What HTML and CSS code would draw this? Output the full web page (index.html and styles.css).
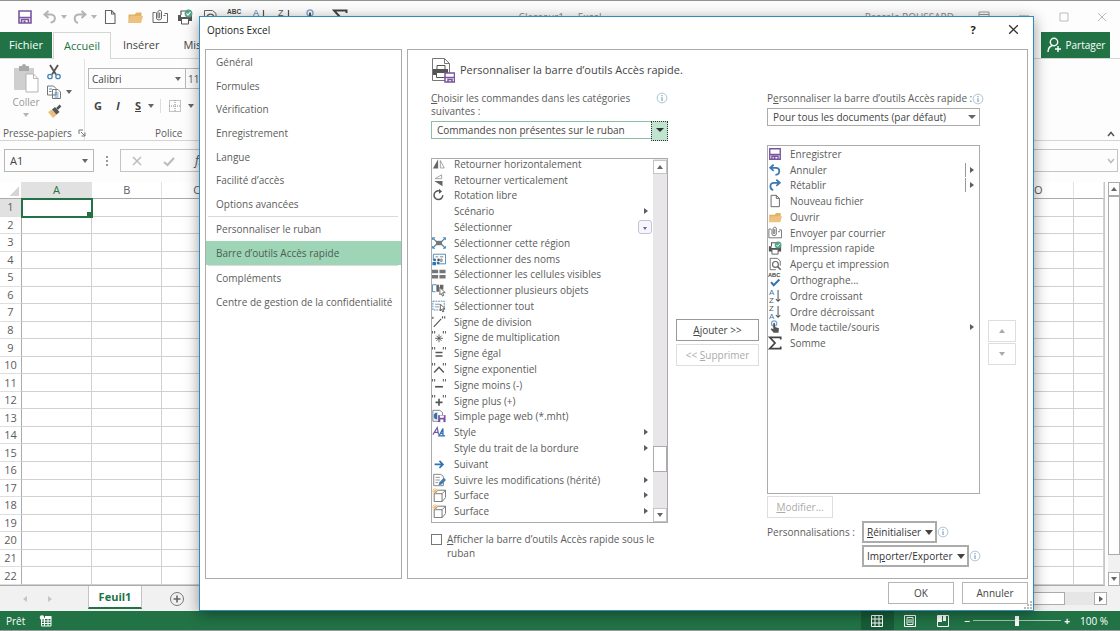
FILE: index.html
```html
<!DOCTYPE html>
<html lang="fr">
<head>
<meta charset="utf-8">
<title>Classeur1 - Excel</title>
<link rel="stylesheet" href="styles.css">
</head>
<body>
<svg class="sprite" aria-hidden="true">
  <symbol id="save" viewBox="0 0 16 16"><path d="M2 2h12v12H2z" fill="#fff" stroke="#7a559f" stroke-width="1.6"/><path d="M2 8.5h12M4.5 14v-3.5h7V14" fill="none" stroke="#7a559f" stroke-width="1.6"/><path d="M6.5 11.5h2V14h-2z" fill="#7a559f"/></symbol>
  <symbol id="undo" viewBox="0 0 16 16"><path d="M6.5 2 2.5 5.5l4 3.5M3 5.5h6c5 0 5.5 7.5-.5 8" fill="none" stroke="currentColor" stroke-width="2"/></symbol>
  <symbol id="redo" viewBox="0 0 16 16"><path d="M9.5 2l4 3.5-4 3.500M13 5.500H7c-5.500 0-5.500 7-1 8.500" fill="none" stroke="currentColor" stroke-width="2"/></symbol>
  <symbol id="new" viewBox="0 0 16 16"><path d="M3.500 1.500h6l3.500 3.500v9.500H3.500zM9.500 1.500V5H13" fill="#fff" stroke="#666" stroke-width="1.100"/></symbol>
  <symbol id="open" viewBox="0 0 16 16"><path d="M1.500 13V5.500h6l2-2h5V7" fill="#e3b269"/><path d="M3.500 7h12.500l-2 7H1z" fill="#edc27f"/></symbol>
  <symbol id="mail" viewBox="0 0 16 16"><path d="M3.500 3.500H1v10h14.500v-9h-3" fill="none" stroke="#666"/><path d="M4.500 3.500v5.500a2.500 2 0 0 0 5 0V2.500a1.800 1.500 0 0 0-3.500 0V8a.8.8 0 0 0 1.700 0V3.500M11.500 6.500h2" fill="none" stroke="#666"/></symbol>
  <symbol id="print" viewBox="0 0 16 16"><path d="M4 6V2h6" fill="none" stroke="#555" stroke-width="1.200"/><path d="M1 6h3v2h8V6h3v6H1z" fill="#555"/><path d="M4.500 9.500h7V15h-7z" fill="#fff" stroke="#555"/><circle cx="11.500" cy="4.500" r="3.900" fill="#55a385"/><path d="m9.500 4.500 1.500 1.600L13.500 3" fill="none" stroke="#fff" stroke-width="1.100"/></symbol>
  <symbol id="preview" viewBox="0 0 16 16"><path d="M14 10V4.500L10.500 1.500h-8v13H9" fill="#fff" stroke="#666"/><circle cx="8.500" cy="8.500" r="3.300" fill="none" stroke="#666" stroke-width="1.300"/><path d="m11 11 3.500 3.500" stroke="#666" stroke-width="1.800"/></symbol>
  <symbol id="spell" viewBox="0 0 16 16"><text x="0" y="5" font-size="6.500" font-weight="bold" font-family="Liberation Sans, sans-serif" fill="#444">ABC</text><path d="m3.500 10.500 3 3.500L13 7.500" fill="none" stroke="#3476ad" stroke-width="2.300"/></symbol>
  <symbol id="az" viewBox="0 0 16 16"><text x="1" y="7" font-size="9" font-family="Liberation Sans, sans-serif" fill="#3476ad">A</text><text x="1" y="15.500" font-size="9" font-family="Liberation Sans, sans-serif" fill="#555">Z</text><path d="M11.500 1v13M9 11.500l2.500 2.500 2.500-2.500" fill="none" stroke="#555" stroke-width="1.200"/></symbol>
  <symbol id="za" viewBox="0 0 16 16"><text x="1" y="7" font-size="9" font-family="Liberation Sans, sans-serif" fill="#555">Z</text><text x="1" y="15.500" font-size="9" font-family="Liberation Sans, sans-serif" fill="#3476ad">A</text><path d="M11.500 1v13M9 11.500l2.500 2.500 2.500-2.500" fill="none" stroke="#555" stroke-width="1.200"/></symbol>
  <symbol id="touch" viewBox="0 0 16 16"><circle cx="7" cy="4" r="3" fill="none" stroke="#7fa8d6" stroke-width="1.400"/><path d="M6 4q1-1.500 2 0v4l4.500 1.500-.5 5H6.500L3 10.500l1-1 2 1z" fill="#555"/></symbol>
  <symbol id="sum" viewBox="0 0 16 16"><path d="M14.500 4V1.500H2L8 8l-6 6.500h12.500V12" fill="none" stroke="#444" stroke-width="2"/></symbol>
  <symbol id="fliph" viewBox="0 0 16 16"><path d="M7 2.500V13H1z" fill="#666"/><path d="M9.500 4v8.500H14z" fill="#fff" stroke="#999"/></symbol>
  <symbol id="flipv" viewBox="0 0 16 16"><path d="M11 2v4.500H3.500z" fill="#fff" stroke="#999"/><path d="M12 9v6L2.500 9z" fill="#666"/></symbol>
  <symbol id="rotate" viewBox="0 0 16 16"><path d="M8 3.300a5 5 0 1 0 4.300 5" fill="none" stroke="#555" stroke-width="1.700"/><path d="M8 .8 11.500 4 8 6.500z" fill="#555"/></symbol>
  <symbol id="region" viewBox="0 0 16 16"><path d="m1 2.500 4 4M15 2.500l-4 4M1 13.500l4-4M15 13.500l-4-4" stroke="#3f7fb0" stroke-width="1.400"/><path d="M4.500 5.500h7v5h-7z" fill="#777"/><path d="M.5 4.500V2h3M12.500 2h3v2.500M.5 11.500V14h3M12.500 14h3v-2.500" fill="none" stroke="#3f7fb0"/></symbol>
  <symbol id="names" viewBox="0 0 16 16"><path d="M1.500 9V2.500h14v11H7" fill="#fff" stroke="#3f7fb0"/><path d="M4 5.500h3M9 5.500h4M10 8h1.500v3H10z" stroke="#777" fill="none"/><circle cx="3" cy="9" r="1.700" fill="#2f74b0"/><circle cx="7.500" cy="9" r="1.500" fill="#555"/><path d="M.5 15v-3.500h4V15zM5.500 14v-3h3v3z" fill="#2f74b0"/></symbol>
  <symbol id="blocks" viewBox="0 0 16 16"><path d="M0 3h7v4H0zM8.500 3h7v4h-7zM0 9h7v4H0zM8.500 9h7v4h-7z" fill="#777"/></symbol>
  <symbol id="objects" viewBox="0 0 16 16"><path d="M5 2H.5v8H4" fill="none" stroke="#3f7fb0"/><path d="M5 2h3v8H5zM9 2h4v5H9z" fill="#666"/><path d="m9 5 6 6-3 .2 1.500 3-1.500.8-1.500-3L9 13.500z" fill="#fff" stroke="#555"/></symbol>
  <symbol id="all" viewBox="0 0 16 16"><path d="M1 2.500h13v10H1z" fill="none" stroke="#3f7fb0" stroke-dasharray="2 1"/><path d="M3.500 6H9M3.500 9H8" stroke="#888"/><path d="m9.500 6 5.500 5-2.700.2 1.200 3-1.300.5-1.300-3-1.400 1.800z" fill="#fff" stroke="#555"/></symbol>
  <symbol id="quotes" viewBox="0 0 16 16"><path d="M.5 1v3M3 1v3M13 1v3M15.500 1v3" stroke="#666" stroke-width="1.300"/></symbol>
  <symbol id="div" viewBox="0 0 16 16"><path d="M1 2v2.500M12 1.500V4M14.500 1.500V4M2 13.500l8.500-9" stroke="#555" stroke-width="1.300"/></symbol>
  <symbol id="mul" viewBox="0 0 16 16"><use href="#quotes"/><path d="M8 5v9M3.500 9.500h9M5 6.500l6 6M11 6.500l-6 6" stroke="#555"/></symbol>
  <symbol id="eq" viewBox="0 0 16 16"><use href="#quotes"/><path d="M4 7.500h8M4 11.500h8" stroke="#555" stroke-width="1.600"/></symbol>
  <symbol id="exp" viewBox="0 0 16 16"><use href="#quotes"/><path d="m2.500 12 5.500-6 5.500 6" fill="none" stroke="#555" stroke-width="1.600"/></symbol>
  <symbol id="minus" viewBox="0 0 16 16"><use href="#quotes"/><path d="M3.500 10h9" stroke="#555" stroke-width="1.900"/></symbol>
  <symbol id="plus" viewBox="0 0 16 16"><use href="#quotes"/><path d="M4 9.500h8M8 5.500v8" stroke="#555" stroke-width="1.900"/></symbol>
  <symbol id="mht" viewBox="0 0 16 16"><path d="M1 1.500h8L12 4v10H1z" fill="#fff" stroke="#777"/><path d="M6 4a4 4 0 0 0 0 8z" fill="#2f74b0"/><path d="M7 7h8.500v8H7z" fill="#7a559f"/><path d="M9 7.500h4.500v2.500H9zM9.500 12h3.500v3H9.500z" fill="#fff"/></symbol>
  <symbol id="style" viewBox="0 0 16 16"><path d="M1 11 6 3l1.500 8M3 8.500h4" fill="none" stroke="#7a559f" stroke-width="1.300"/><path d="M8 12.500 12.500 4v8.500M7 12.500h8M10 9.500h3" fill="none" stroke="#2f74b0" stroke-width="1.500"/></symbol>
  <symbol id="next" viewBox="0 0 16 16"><path d="M3 8.500h9M8.500 4.500l4 4-4 4" fill="none" stroke="#2f74b0" stroke-width="1.900"/></symbol>
  <symbol id="track" viewBox="0 0 16 16"><path d="M2 1.500h8L13 4v10.500H2z" fill="#fff" stroke="#777"/><path d="M4 5h5M4 8h5M4 11h3" stroke="#888"/><path d="m7.500 14 1-3.500 5-5 2.500 2.500-5 5z" fill="#3f7fb0"/></symbol>
  <symbol id="cube" viewBox="0 0 16 16"><path d="M2.500 6.500h9v9h-9zM2.500 6.500l4-4h9v8.500l-4 4.500M11.500 6.500l4-4" fill="#fff" stroke="#666"/><path d="M3.500 0v7M0 3.500h7M1 1l5 5M6 1 1 6" stroke="#e8b878"/></symbol>
  <symbol id="info" viewBox="0 0 16 16"><circle cx="8" cy="8" r="6.500" fill="#fff" stroke="#8fb2c6"/><path d="M8 7v5M8 4v1.500" stroke="#6d93b5" stroke-width="1.400"/></symbol>
  <symbol id="chev" viewBox="0 0 8 8"><path d="m1 6 3-3.500L7 6" fill="none" stroke="currentColor" stroke-width="1.500"/></symbol>
</svg>

<div class="app">
  <header class="titlebar">
    <div class="qat">
      <button class="slot" aria-label="Enregistrer"><svg><use href="#save"/></svg></button>
      <button class="slot split faded" aria-label="Annuler"><svg><use href="#undo"/></svg><i class="caret"></i></button>
      <button class="slot split faded" aria-label="Rétablir"><svg><use href="#redo"/></svg><i class="caret"></i></button>
      <button class="slot" aria-label="Nouveau"><svg><use href="#new"/></svg></button>
      <button class="slot" aria-label="Ouvrir"><svg><use href="#open"/></svg></button>
      <button class="slot" aria-label="Envoyer"><svg><use href="#mail"/></svg></button>
      <button class="slot" aria-label="Imprimer"><svg><use href="#print"/></svg></button>
      <button class="slot" aria-label="Aperçu"><svg><use href="#preview"/></svg></button>
      <button class="slot" aria-label="Orthographe"><svg><use href="#spell"/></svg></button>
      <button class="slot" aria-label="Tri croissant"><svg><use href="#az"/></svg></button>
      <button class="slot" aria-label="Tri décroissant"><svg><use href="#za"/></svg></button>
      <button class="slot split" aria-label="Mode tactile"><svg><use href="#touch"/></svg><i class="dash"></i></button>
      <button class="slot" aria-label="Somme"><svg><use href="#sum"/></svg></button>
      <button class="slot" aria-label="Autres"><i class="dash"></i></button>
    </div>
    <div class="doc-title">Classeur1 &nbsp;- &nbsp;Excel</div>
    <div class="win-controls">
      <span class="user">Pascale ROUSSARD</span>
      <button class="win" aria-label="Ruban"><svg viewBox="0 0 12 12"><path d="M1 1h10v10H1zM1 3.500h10M6 9V5.500M4.500 7 6 5.500 7.500 7" fill="none" stroke="#999"/></svg></button>
      <button class="win" aria-label="Réduire"><svg viewBox="0 0 12 12"><path d="M1 5h10" stroke="#999"/></svg></button>
      <button class="win" aria-label="Agrandir"><svg viewBox="0 0 12 12"><path d="M2 2h8v8H2z" fill="none" stroke="#bbb"/></svg></button>
      <button class="win last-win" aria-label="Fermer"><svg viewBox="0 0 12 12"><path d="m2 2 8 8M10 2l-8 8" stroke="#bbb"/></svg></button>
    </div>
  </header>

  <nav class="tabs">
    <button class="tab file">Fichier</button>
    <button class="tab active">Accueil</button>
    <button class="tab">Insérer</button>
    <button class="tab">Mise en page</button>
    <button class="share"><svg viewBox="0 0 16 16"><circle cx="8" cy="5" r="3.700" fill="none" stroke="#fff" stroke-width="1.400"/><path d="M2 15q0-5 4.500-6.500M12 9v6M9 12h6" fill="none" stroke="#fff" stroke-width="1.400"/></svg>Partager</button>
  </nav>

  <section class="ribbon">
    <div class="group clipboard">
      <div class="group-body">
        <button class="paste">
          <svg viewBox="0 0 28 30"><path d="M2 4h20v22H2z" fill="#cfcfcf"/><path d="M7 2h3a2 2 0 0 1 4 0h3v5H7z" fill="#a9a9a9"/><path d="M14 10h7.500l4.500 4.500V28H14z" fill="#fff" stroke="#b5b5b5"/><path d="M21.500 10v4.500H26" fill="none" stroke="#b5b5b5"/></svg>
          <span>Coller</span><i class="caret"></i>
        </button>
        <div class="clip-tools">
          <button aria-label="Couper"><svg viewBox="0 0 16 16"><path d="m4 1 6 9.500M12 1 6 10.500" stroke="#555" stroke-width="1.800"/><circle cx="4" cy="12.500" r="2.200" fill="none" stroke="#4682b4" stroke-width="1.300"/><circle cx="12" cy="12.500" r="2.200" fill="none" stroke="#4682b4" stroke-width="1.300"/></svg></button>
          <button aria-label="Copier"><svg viewBox="0 0 16 16"><path d="M1.500 2h6L10 4.500V11H1.500zM6.500 5.500H12L14.500 8v6.500h-8z" fill="#fff" stroke="#777"/><path d="M3 5h3M3 7.500h2.500M8.500 9h4M8.500 11h4M8.500 13h4" stroke="#5d90bf"/></svg><i class="caret"></i></button>
          <button aria-label="Reproduire la mise en forme"><svg viewBox="0 0 16 16"><path d="m2 8 5 6 4-3.500-5-5z" fill="#eabf7c"/><path d="M6 5.500 9 3l4.500 5-3 2.500z" fill="#555"/><path d="m11 5 3.500-3.500" stroke="#555" stroke-width="2.500"/></svg></button>
        </div>
      </div>
      <div class="group-name">Presse-papiers<svg viewBox="0 0 8 8"><path d="M1 5V1h4M3 3l4 4M7 3.500V7H3.500" fill="none" stroke="#777"/></svg></div>
    </div>
    <div class="group font">
      <div class="font-row">
        <label class="combo"><input value="Calibri" aria-label="Police"><i class="caret"></i></label>
        <input class="size" value="11" aria-label="Taille">
      </div>
      <div class="format-row">
        <button class="fmt"><b>G</b></button>
        <button class="fmt"><b><em>I</em></b></button>
        <button class="fmt"><b><u>S</u></b></button><i class="caret"></i>
        <button class="fmt borders" aria-label="Bordures"><svg viewBox="0 0 14 14"><path d="M1.500 1.500h11v11h-11zM7 1v12M1 7h12" fill="none" stroke="#888" stroke-dasharray="1 1"/></svg></button><i class="caret"></i>
      </div>
      <div class="group-name">Police</div>
    </div>
    <button class="collapse" aria-label="Réduire le ruban"><svg><use href="#chev"/></svg></button>
  </section>

  <section class="formula">
    <label class="namebox"><input value="A1" aria-label="Zone Nom"><i class="caret"></i></label>
    <i class="dots"></i>
    <div class="fx">
      <svg viewBox="0 0 12 12"><path d="m2 2 8 8M10 2l-8 8" stroke="#bbb" stroke-width="1.500"/></svg>
      <svg viewBox="0 0 12 12"><path d="m1 7 3.500 3L11 3" fill="none" stroke="#bbb" stroke-width="2"/></svg>
      <em>fx</em>
      <svg class="expand"><use href="#chev"/></svg>
    </div>
  </section>

  <main class="sheet">
    <table class="cells" id="grid"></table>
    <div class="vscroll"><button aria-label="Haut"><i class="caret up"></i></button><div class="vthumb"></div><button aria-label="Bas"><i class="caret"></i></button></div>
  </main>

  <footer class="sheetbar">
    <i class="tri left"></i><i class="tri"></i>
    <button class="sheet-tab">Feuil1</button>
    <button class="add" aria-label="Nouvelle feuille"><svg viewBox="0 0 16 16"><circle cx="8" cy="8" r="6.500" fill="none" stroke="#777"/><path d="M8 4.500v7M4.500 8h7" stroke="#666" stroke-width="1.600"/></svg></button>
    <div class="hscroll"><div class="hthumb"></div><div class="htrack"></div><button aria-label="Droite"><i class="tri"></i></button></div>
  </footer>

  <div class="status">
    <span>Prêt</span>
    <svg class="macro" viewBox="0 0 14 14"><path d="M2.500 4.500h9.500v7.500H2.500zM2.500 7h9.500M2.500 9.500h9.500M5.500 5v7M9 5v7" fill="none" stroke="#fff"/><path d="M6 2h6.500v3H6z" fill="#fff"/><circle cx="3" cy="3.500" r="2.200" fill="#fff"/></svg>
    <div class="views">
      <button class="on" aria-label="Normal"><svg viewBox="0 0 14 14"><path d="M1.500 1.500h11v11h-11zM1.500 5h11M1.500 9h11M5 1.500v11M9 1.500v11" fill="none" stroke="#fff"/></svg></button>
      <button aria-label="Mise en page"><svg viewBox="0 0 14 14"><path d="M1.500 1.500h11v11h-11zM4 3.500h6v7H4zM5 6h4M5 8h4" fill="none" stroke="#fff"/></svg></button>
      <button aria-label="Sauts de page"><svg viewBox="0 0 14 14"><path d="M1.500 1.500h11v11h-11z" fill="none" stroke="#fff"/><path d="M2 2h4v6H2zM7 2h3v5H7z" fill="#fff"/></svg></button>
    </div>
    <div class="zoom"><b>−</b><input type="range" min="0" max="200" value="100" aria-label="Zoom"><b>+</b><span>100 %</span></div>
  </div>
</div>

<div class="dialog" role="dialog" aria-labelledby="dlg-title">
  <div class="dlg-head">
    <h1 id="dlg-title">Options Excel</h1>
    <button aria-label="Aide"><b>?</b></button>
    <button aria-label="Fermer"><svg viewBox="0 0 12 12"><path d="m2 2 8 8M10 2l-8 8" stroke="#333" stroke-width="1.200"/></svg></button>
  </div>
  <div class="dlg-body">
    <nav class="side">
      <div class="side-group first"><a href="#">Général</a><a href="#">Formules</a><a href="#">Vérification</a><a href="#">Enregistrement</a><a href="#">Langue</a><a href="#">Facilité d’accès</a><a href="#">Options avancées</a></div>
      <div class="side-group"><a href="#">Personnaliser le ruban</a><a href="#" class="selected">Barre d’outils Accès rapide</a></div>
      <div class="side-group"><a href="#">Compléments</a><a href="#">Centre de gestion de la confidentialité</a></div>
    </nav>
    <div class="panel">
      <h2><svg viewBox="0 0 24 26"><path d="M1.500 1.500h12l5 5v17h-17zM13.500 1.500v5h5" fill="#fff" stroke="#777"/><path d="M6 8.500h8V13H6z" fill="#fff" stroke="#555"/><path d="M2 12h15v6H2z" fill="#555"/><path d="M5.500 15.500h9v5h-9z" fill="#fff" stroke="#555"/><path d="M14 16h9.500v9H14z" fill="#fff" stroke="#7a559f" stroke-width="1.500"/><path d="M14 20.500h9M17 25v-2.500h4V25" stroke="#7a559f" fill="none" stroke-width="1.500"/></svg>Personnaliser la barre d’outils Accès rapide.</h2>
      <div class="columns">
        <div class="col source">
          <div class="label-row"><label for="cat"><u>C</u>hoisir les commandes dans les catégories suivantes :</label><svg class="info"><use href="#info"/></svg></div>
          <div class="select focus"><select id="cat"><option>Commandes non présentes sur le ruban</option></select><i class="caret"></i></div>
          <div class="listbox">
            <ul class="items long">
              <li><svg><use href="#fliph"/></svg>Retourner horizontalement</li>
              <li><svg><use href="#flipv"/></svg>Retourner verticalement</li>
              <li><svg><use href="#rotate"/></svg>Rotation libre</li>
              <li><svg></svg>Scénario<i class="tri"></i></li>
              <li><svg></svg>Sélectionner<i class="drop"><i class="caret"></i></i></li>
              <li><svg><use href="#region"/></svg>Sélectionner cette région</li>
              <li><svg><use href="#names"/></svg>Sélectionner des noms</li>
              <li><svg><use href="#blocks"/></svg>Sélectionner les cellules visibles</li>
              <li><svg><use href="#objects"/></svg>Sélectionner plusieurs objets</li>
              <li><svg><use href="#all"/></svg>Sélectionner tout</li>
              <li><svg><use href="#div"/></svg>Signe de division</li>
              <li><svg><use href="#mul"/></svg>Signe de multiplication</li>
              <li><svg><use href="#eq"/></svg>Signe égal</li>
              <li><svg><use href="#exp"/></svg>Signe exponentiel</li>
              <li><svg><use href="#minus"/></svg>Signe moins (-)</li>
              <li><svg><use href="#plus"/></svg>Signe plus (+)</li>
              <li><svg><use href="#mht"/></svg>Simple page web (*.mht)</li>
              <li><svg><use href="#style"/></svg>Style<i class="tri"></i></li>
              <li><svg></svg>Style du trait de la bordure<i class="tri"></i></li>
              <li><svg><use href="#next"/></svg>Suivant</li>
              <li><svg><use href="#track"/></svg>Suivre les modifications (hérité)<i class="tri"></i></li>
              <li><svg><use href="#cube"/></svg>Surface<i class="tri"></i></li>
              <li><svg><use href="#cube"/></svg>Surface<i class="tri"></i></li>
            </ul>
            <div class="scroll"><button aria-label="Haut"><i class="caret up"></i></button><div class="thumb"></div><button aria-label="Bas"><i class="caret"></i></button></div>
          </div>
          <div class="check"><input type="checkbox" id="below"><label for="below"><u>A</u>fficher la barre d’outils Accès rapide sous le ruban</label></div>
        </div>
        <div class="col transfer">
          <button class="btn strong"><span><u>A</u>jouter &gt;&gt;</span></button>
          <button class="btn" disabled><span>&lt;&lt; <u>S</u>upprimer</span></button>
        </div>
        <div class="col target">
          <div class="label-row single"><label for="doc">P<u>e</u>rsonnaliser la barre d’outils Accès rapide :</label><svg class="info"><use href="#info"/></svg></div>
          <div class="select"><select id="doc"><option>Pour tous les documents (par défaut)</option></select><i class="caret"></i></div>
          <div class="listbox">
            <ul class="items short">
              <li><svg><use href="#save"/></svg>Enregistrer</li>
              <li><svg class="blue"><use href="#undo"/></svg>Annuler<i class="tri bar"></i></li>
              <li><svg class="blue"><use href="#redo"/></svg>Rétablir<i class="tri bar"></i></li>
              <li><svg><use href="#new"/></svg>Nouveau fichier</li>
              <li><svg><use href="#open"/></svg>Ouvrir</li>
              <li><svg><use href="#mail"/></svg>Envoyer par courrier</li>
              <li><svg><use href="#print"/></svg>Impression rapide</li>
              <li><svg><use href="#preview"/></svg>Aperçu et impression</li>
              <li><svg><use href="#spell"/></svg>Orthographe...</li>
              <li><svg><use href="#az"/></svg>Ordre croissant</li>
              <li><svg><use href="#za"/></svg>Ordre décroissant</li>
              <li><svg><use href="#touch"/></svg>Mode tactile/souris<i class="tri"></i></li>
              <li><svg><use href="#sum"/></svg>Somme</li>
            </ul>
          </div>
          <button class="btn modify" disabled><span><u>M</u>odifier...</span></button>
          <div class="custom">
            <span class="custom-label">Personnalisations :</span>
            <div class="custom-row"><button class="btn menu"><span><u>R</u>éinitialiser</span><i class="caret"></i></button><svg class="info"><use href="#info"/></svg></div>
            <div class="custom-row second"><button class="btn menu"><span>Im<u>p</u>orter/Exporter</span><i class="caret"></i></button><svg class="info"><use href="#info"/></svg></div>
          </div>
        </div>
        <div class="col order">
          <button class="btn" disabled aria-label="Monter"><i class="caret up"></i></button>
          <button class="btn" disabled aria-label="Descendre"><i class="caret"></i></button>
        </div>
      </div>
    </div>
  </div>
  <div class="dlg-foot"><button class="btn">OK</button><button class="btn">Annuler</button></div>
  <svg class="grip" viewBox="0 0 8 8"><path d="M6 0h2v2H6zM3 3h2v2H3zM6 3h2v2H6zM0 6h2v2H0zM3 6h2v2H3zM6 6h2v2H6z" fill="#bbb"/></svg>
</div>
<script src="app.js"></script>
</body>
</html>
```
FILE: styles.css
```css
* { box-sizing: border-box; }
html, body { height: 100%; margin: 0; }
body { font: 10px/14px "Open Sans", "Noto Sans", sans-serif; color: #5c5c5c; background: #fdfdfd; overflow: hidden; }
button, input, select { font: inherit; color: inherit; margin: 0; padding: 0; border: 0; background: none; min-width: 0; }
button { display: flex; align-items: center; justify-content: center; white-space: nowrap; }
svg { width: 16px; height: 16px; flex: none; display: block; }
.sprite { position: absolute; width: 0; height: 0; }
.caret { border: 3px solid transparent; border-top: 4px solid #666; border-bottom: 0; flex: none; }
.caret.up { border-top: 0; border-bottom: 4px solid #666; }
.tri { border: 3px solid transparent; border-left: 4px solid #5b5b66; border-right: 0; flex: none; }
.tri.left { border-left: 0; border-right: 4px solid #c4c4c4; }

.app { height: 100%; display: flex; flex-direction: column; border-top: 1px solid #8e9490; border-bottom: 1px solid #9a9a9a; }
.titlebar { height: 31px; flex: none; display: flex; align-items: center; }
.qat { flex: 1; display: flex; }
.slot { width: 25px; }
.slot:first-child { margin-left: 12px; }
.split { width: 30px; gap: 3px; justify-content: flex-end; }
.faded { color: #b4b4b4; }
.faded .caret { border-top-color: #b4b4b4; }
.dash { width: 5px; height: 1px; background: #666; }
.doc-title { color: #8a8a8a; }
.win-controls { flex: 1; display: flex; align-items: center; justify-content: flex-end; color: #8a8a8a; }
.user { margin-right: 10px; }
.win { width: 40px; }
.last-win { width: 36px; }
.win svg { width: 12px; height: 12px; }

.tabs { height: 27px; flex: none; display: flex; font-size: 11px; color: #444; border-bottom: 1px solid #d5d5d5; }
.tab { padding: 0 12px; }
.file { width: 52px; background: #217346; color: #fff; margin-right: 1px; }
.active { color: #217346; border: 1px solid #d5d5d5; border-bottom: 0; background: #fdfdfd; margin-bottom: -1px; padding: 0 10px; }
.share { margin-left: auto; margin-right: 10px; width: 69px; gap: 4px; background: #217346; color: #fff; font-size: 10px; }

.ribbon { height: 82px; flex: none; display: flex; border-bottom: 1px solid #d5d5d5; }
.group { display: flex; flex-direction: column; }
.clipboard { width: 85px; border-right: 1px solid #e2e2e2; padding-top: 5px; }
.group-body { flex: 1; display: flex; }
.paste { width: 44px; margin-left: 4px; flex-direction: column; justify-content: flex-start; gap: 1px; color: #999; }
.paste svg { width: 28px; height: 30px; }
.paste .caret { border-top-color: #b4b4b4; margin-top: 3px; }
.clip-tools { display: flex; flex-direction: column; gap: 4px; margin-left: -2px; }
.clip-tools button { gap: 4px; justify-content: flex-start; }
.group-name { height: 15px; padding-left: 3px; display: flex; align-items: center; gap: 6px; white-space: nowrap; }
.group-name svg { width: 8px; height: 8px; }
.font { width: 140px; padding: 9px 0 0 3px; gap: 6px; }
.font-row { display: flex; }
.combo, .namebox { display: flex; align-items: center; border: 1px solid #b8b8b8; color: #444; }
.combo { width: 98px; height: 21px; padding: 0 4px 0 3px; }
.combo input, .namebox input { flex: 1; }
.size { width: 34px; border: 1px solid #b8b8b8; border-left: 0; padding-left: 2px; }
.format-row { display: flex; align-items: center; height: 21px; color: #444; font-size: 11px; }
.fmt { width: 20px; }
.borders { width: 28px; margin-left: 6px; border-left: 1px solid #ddd; }
.borders svg { width: 14px; height: 14px; }
.font .group-name { padding-left: 67px; margin-top: 3px; }
.collapse { margin-left: auto; width: 18px; align-items: flex-end; padding-bottom: 2px; color: #555; }
.collapse svg, .expand { width: 8px; height: 8px; }

.formula { height: 41px; flex: none; display: flex; align-items: center; padding: 0 2px 2px 4px; }
.namebox { width: 90px; height: 23px; padding: 0 5px; font-size: 11px; }
.namebox .caret { border-width: 4px 3px 0; }
.dots { width: 26px; height: 10px; background: radial-gradient(circle, #999 1px, transparent 1px) center / 26px 4px; }
.fx { flex: 1; height: 23px; border: 1px solid #c4c4c4; display: flex; align-items: center; gap: 20px; padding: 0 2px 0 10px; color: #555; font-size: 12px; }
.fx svg { width: 12px; height: 12px; }
.fx .expand { width: 8px; height: 8px; margin-left: auto; color: #bbb; transform: rotate(180deg); }

.sheet { flex: 1; display: flex; min-height: 0; gap: 3px; }
.cells { flex: 1; width: 100%; table-layout: fixed; border-collapse: separate; border-spacing: 0; height: 100%; border-right: 1px solid #c6c6c6; border-bottom: 1px solid #ababab; background: #fff; }
.cells th, .cells td { padding: 0; border-right: 1px solid #d0d0d0; border-bottom: 1px solid #d0d0d0; line-height: 14px; font-weight: 400; font-size: 11px; }
.cells thead th { height: 17px; border-right-color: #e2e2e2; border-bottom-color: #ababab; }
.cells thead th.current { background: #e1e1e1; color: #217346; }
.cells thead th.corner { background: linear-gradient(135deg, transparent 50%, #d5d5d5 50%) 9px 4px / 10px 10px no-repeat; }
.cells tbody th { border-right-color: #ababab; border-bottom-color: #dedede; }
.cells tbody th.current { background: #e1e1e1; }
.cells td.selected { outline: 2px solid #217346; outline-offset: -1px; background: linear-gradient(#217346, #217346) right bottom / 4px 4px no-repeat; }
.cells .head { width: 22px; }
.cells .last { width: 30px; }
.vscroll { width: 12px; flex: none; display: flex; flex-direction: column; background: #f1f1f1; }
.vscroll button { height: 14px; border: 1px solid #ababab; background: #fff; }
.vthumb { flex: 1; margin-bottom: 17px; border: 1px solid #ababab; background: #fff; }

.sheetbar { height: 25px; flex: none; display: flex; align-items: center; background: #f1f1f1; padding-left: 23px; }
.sheetbar > .tri { border-left-color: #c4c4c4; margin-right: 21px; }
.sheetbar > .tri.left { border-right-color: #c4c4c4; }
.sheet-tab { align-self: flex-start; width: 54px; height: 23px; margin-left: 15px; font-size: 11px; font-weight: 700; color: #217346; background: #fff; border: 1px solid #c4c4c4; border-top: 0; border-bottom: 2px solid #217346; }
.add { margin-left: 27px; }
.hscroll { margin-left: auto; width: 600px; padding-right: 13px; display: flex; height: 13px; }
.hthumb { flex: 1; background: #fff; border: 1px solid #ababab; }
.htrack { width: 29px; background: #e6e6e6; }
.hscroll button { width: 13px; background: #fff; border: 1px solid #ababab; }

.status { height: 19px; flex: none; display: flex; align-items: center; background: #217346; color: #fff; padding: 0 12px 0 6px; }
.macro { width: 14px; height: 14px; margin-left: 14px; }
.views { margin-left: auto; display: flex; align-self: stretch; }
.views button { width: 33px; }
.views .on { background: #185c37; }
.views svg { width: 14px; height: 14px; }
.zoom { display: flex; align-items: center; gap: 3px; margin-left: 5px; }
.zoom span { margin-left: 7px; }
.zoom input { width: 88px; height: 12px; appearance: none; background: linear-gradient(#a5c9b4, #a5c9b4) center / 100% 1px no-repeat; }
.zoom input::-webkit-slider-thumb { appearance: none; width: 4px; height: 10px; background: #fff; }

.dialog { position: absolute; inset: 16px 86px 20px 199px; display: flex; flex-direction: column; padding: 0 5px; background: #fff; border: 1px solid #2f8dbb; box-shadow: 0 3px 14px rgba(0, 0, 0, .4); }
.dlg-head { height: 32px; flex: none; display: flex; align-items: center; color: #222; padding: 0 0 7px 2px; }
.dlg-head h1 { flex: 1; margin: 0; font-size: 10px; font-weight: 400; }
.dlg-head button { width: 50px; font-size: 11px; }
.dlg-head button:last-child { width: 30px; }
.dlg-head svg { width: 13px; height: 13px; }
.dlg-body { flex: 1; min-height: 0; display: flex; gap: 5px; }
.side { width: 197px; flex: none; border: 1px solid #ababab; }
.side-group { display: grid; grid-auto-rows: 24px; }
.side-group.first { height: 166px; grid-auto-rows: 1fr; }
.side-group + .side-group { border-top: 1px solid #d9d9d9; margin: 0 3px 0 2px; }
.side a { display: flex; align-items: center; padding-left: 10px; color: #5c5c5c; text-decoration: none; white-space: nowrap; }
.side-group + .side-group a { margin: 0 -3px 0 -2px; }
.side a.selected { background: #9fd5b7; color: #4c5c53; }
.panel { flex: 1; border: 1px solid #ababab; padding: 7px 11px 0 23px; }
.panel h2 { margin: 0; display: flex; align-items: center; gap: 5px; font-size: 11px; font-weight: 400; height: 26px; color: #444; }
.panel h2 svg { width: 24px; height: 26px; }
.columns { display: grid; grid-template-columns: 237px 83px 213px 28px; column-gap: 8px; padding-top: 9px; }
.col { display: flex; flex-direction: column; }
.label-row { display: flex; align-items: flex-start; justify-content: space-between; line-height: 13px; height: 26px; }
.label-row label { max-width: 215px; }
.label-row.single { height: 13px; align-items: center; }
.label-row.single label { max-width: none; white-space: nowrap; }
.info { width: 12px; height: 12px; }
.select { position: relative; display: flex; align-items: center; height: 18px; margin-top: 3px; border: 1px solid #ababab; color: #444; }
.select select { appearance: none; width: 100%; height: 16px; padding-left: 5px; line-height: 16px; }
.select .caret { position: absolute; right: 3px; border-width: 4px 4px 0; }
.select.focus { border-color: #8cbfa4; }
.select.focus::after { content: ""; position: absolute; right: -1px; top: -1px; width: 15px; height: 18px; background: #bfe5d0; border: 1px dotted #333; }
.select.focus .caret { z-index: 1; border-top-color: #333; }
.listbox { display: flex; height: 365px; margin-top: 19px; border: 1px solid #ababab; overflow: hidden; background: #fff; }
.target .listbox { height: 349px; }
.items { flex: 1; list-style: none; margin: 0; padding: 0; display: grid; grid-auto-rows: 1fr; }
.items.long { height: 363px; margin-top: -3px; }
.items.short { height: 205px; }
.items li { display: flex; align-items: center; white-space: nowrap; min-height: 0; padding-right: 5px; }
.items svg { width: 14px; height: 14px; margin-right: 8px; overflow: visible; }
.items .tri { margin-left: auto; }
.items .bar { position: relative; }
.items .bar::before { content: ""; position: absolute; left: -9px; top: -7px; width: 1px; height: 14px; background: #999; }
.blue { color: #3a78b0; }
.drop { width: 14px; height: 14px; margin: 0 -4px 0 auto; border: 1px solid #c3c3d5; border-radius: 3px; background: #f6f6fc; display: flex; align-items: center; justify-content: center; }
.drop .caret { border-width: 3px 2px 0; margin-top: 3px; border-top-color: #5f6aa0; }
.scroll { width: 14px; display: flex; flex-direction: column; background: #e8e6e8; padding-top: 1px; }
.scroll button { height: 14px; background: #fff; border: 1px solid #c4c4c4; }
.thumb { height: 26px; margin-top: auto; margin-bottom: 36px; border: 1px solid #ababab; background: #fff; }
.check { display: flex; gap: 5px; padding-top: 9px; }
.check input { appearance: none; width: 11px; height: 11px; margin-top: 2px; border: 1px solid #777; flex: none; }
.btn { height: 22px; background: #fff; border: 1px solid #b5b5b5; color: #444; }
.btn:disabled { color: #ababab; border-color: #dedede; }
.btn.strong { border-color: #999; }
.transfer { padding-top: 227px; gap: 3px; }
.order { padding-top: 228px; gap: 1px; }
.order .caret { border-top-color: #aaa; }
.order .caret.up { border-bottom-color: #aaa; }
.modify { width: 66px; margin-top: 2px; }
.custom { display: grid; grid-template-columns: 95px 1fr; row-gap: 2px; margin-top: 3px; align-items: center; }
.custom-label { white-space: nowrap; }
.custom-row { display: flex; align-items: center; white-space: nowrap; }
.custom-row.second { grid-column: 2; }
.menu { border: 2px solid #ababab; gap: 4px; padding: 0 2px 0 3px; color: #333; }
.menu .caret { border-width: 5px 4px 0; border-top-color: #444; }
.dlg-foot { height: 31px; flex: none; display: flex; justify-content: flex-end; gap: 8px; padding-top: 3px; }
.dlg-foot .btn { width: 66px; }
.grip { position: absolute; right: 1px; bottom: 1px; width: 8px; height: 8px; }
```
FILE: app.js
```js
const columns = "ABCDEFGHIJKLMNO".split("").concat("");
const table = document.getElementById("grid");
const head = columns.map((name, i) =>
  `<th class="${i === 0 ? "current" : i === 15 ? "last" : ""}">${name}</th>`).join("");
let rows = "";
for (let r = 1; r <= 22; r++) {
  const cells = columns.map((_, i) => `<td${r === 1 && i === 0 ? ' class="selected"' : ""}></td>`).join("");
  rows += `<tr><th${r === 1 ? ' class="current"' : ""}>${r}</th>${cells}</tr>`;
}
table.innerHTML = `<thead><tr><th class="head corner"></th>${head}</tr></thead><tbody>${rows}</tbody>`;
```
